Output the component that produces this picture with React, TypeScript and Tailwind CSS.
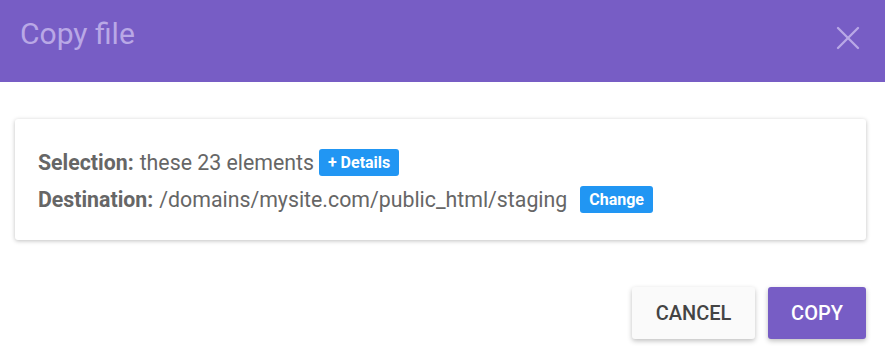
import { X } from "lucide-react";

const App = () => {
  return (
    <div className="w-[885px] h-[360px] bg-white font-['Roboto',sans-serif] overflow-hidden">
      {/* header */}
      <div className="h-[82px] bg-[#775dc5] flex items-start justify-between pl-[20px] pr-[17px]">
        <h1 className="text-[30px] leading-[30px] text-[#b9a8e6] pt-[19px]">Copy file</h1>
        <X className="w-[40px] h-[40px] text-[#b9a8e6] mt-[18px]" strokeWidth={1.4} />
      </div>

      {/* body */}
      <div className="pl-[15px] pr-[19px] pt-[37px]">
        <div className="rounded-[3px] bg-white shadow-[0_1px_4px_rgba(0,0,0,0.25)] px-[23px] pt-[30px] pb-[27px] text-[21.3px] leading-[27px] text-[#666] flex flex-col gap-[10px]">
          <div className="flex items-center h-[27px]">
            <span className="font-bold">Selection:</span>
            <span className="ml-[6px]">these 23 elements</span>
            <span className="ml-[5px] bg-[#2196f3] text-white text-[16px] font-bold rounded-[3px] px-[9px] h-[27px] flex items-center">+ Details</span>
          </div>
          <div className="flex items-center h-[27px]">
            <span className="font-bold">Destination:</span>
            <span className="ml-[6px]">/domains/mysite.com/public_html/staging</span>
            <span className="ml-[13px] bg-[#2196f3] text-white text-[16px] font-bold rounded-[3px] px-[9px] h-[27px] flex items-center">Change</span>
          </div>
        </div>
      </div>

      {/* footer */}
      <div className="flex justify-end gap-[13px] pr-[19px] pt-[47px]">
        <button className="w-[123px] h-[52px] rounded-[3px] bg-[#fafafa] text-[#444] text-[20px] font-medium shadow-[0_2px_5px_rgba(0,0,0,0.25)]">
          CANCEL
        </button>
        <button className="w-[98px] h-[52px] rounded-[3px] bg-[#775dc5] text-white text-[20px] font-medium shadow-[0_2px_5px_rgba(0,0,0,0.25)]">
          COPY
        </button>
      </div>
    </div>
  );
};

export default App;
